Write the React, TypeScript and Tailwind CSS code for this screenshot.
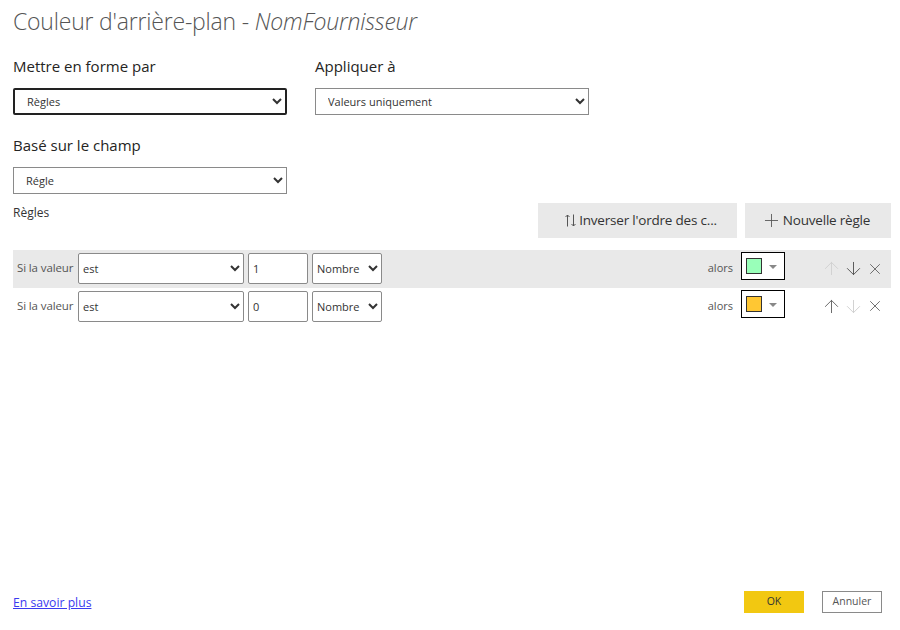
import { ArrowDown, ArrowUp, Plus, X } from "lucide-react";

const font = "font-['Open_Sans','Noto_Sans',sans-serif]";

function SortIcon() {
  return (
    <svg width="11" height="13" viewBox="0 0 11 13" fill="none" stroke="#555" strokeWidth="1">
      <path d="M2.5 12.5V1M.5 3 2.5 1l2 2" />
      <path d="M8.5 .5V12M6.5 10l2 2 2-2" />
    </svg>
  );
}

function RuleRow({
  value,
  color,
  active,
  upOff,
  downOff,
}: {
  value: string;
  color: string;
  active?: boolean;
  upOff?: boolean;
  downOff?: boolean;
}) {
  return (
    <div className={`flex h-[37.5px] items-center pl-[4px] ${active ? "bg-[#e9e9e9]" : "bg-white"}`}>
      <span className="mb-[2px] w-[61px] shrink-0 text-[11.5px] tracking-[-0.12px] text-[#555]">Si la valeur</span>
      <select
        defaultValue="est"
        className="h-[31px] w-[166px] rounded-[2px] border border-[#8a8a8a] bg-white text-[11px] text-[#333]"
      >
        <option>est</option>
      </select>
      <input
        readOnly
        value={value}
        className="ml-[4px] h-[31px] w-[60px] rounded-[2px] border border-[#8a8a8a] bg-white px-[4px] text-[11px] text-[#333]"
      />
      <select
        defaultValue="Nombre"
        className="ml-[4px] h-[31px] w-[70px] rounded-[2px] border border-[#8a8a8a] bg-white text-[11px] text-[#333]"
      >
        <option>Nombre</option>
      </select>
      <span className="mb-[1px] ml-auto text-[11px] text-[#555]">alors</span>
      <button className="mb-[5px] ml-[8px] flex h-[28px] w-[44px] items-center border border-black bg-white pl-[4px]">
        <span className="h-[16px] w-[16px] border border-[#333]" style={{ backgroundColor: color }} />
        <span className="ml-[7px] mt-[2px] h-0 w-0 border-x-[4px] border-t-[4px] border-x-transparent border-t-[#888]" />
      </button>
      <div className="ml-[35px] mr-[5px] flex items-center">
        <span className="flex w-[22px] justify-center">
          <ArrowUp size={21} strokeWidth={1.1} className={upOff ? "text-[#d0d0d0]" : "text-[#666]"} />
        </span>
        <span className="flex w-[22px] justify-center">
          <ArrowDown size={21} strokeWidth={1.1} className={downOff ? "text-[#d0d0d0]" : "text-[#555]"} />
        </span>
        <span className="flex w-[22px] justify-center">
          <X size={18} strokeWidth={1.1} className="text-[#555]" />
        </span>
      </div>
    </div>
  );
}

export default function App() {
  return (
    <div className={`${font} relative flex h-[630px] w-[900px] flex-col overflow-hidden bg-white pl-[13px] pr-[9px]`}>
      <h1 className="mt-[4px] h-[34px] text-[23px] font-light leading-[34px] tracking-[-0.2px] text-[#555]">
        Couleur d'arrière-plan - <i>NomFournisseur</i>
      </h1>

      <div className="mt-[17px] flex gap-[28px]">
        <div className="w-[274px]">
          <label className="block h-[22px] text-[15px] leading-[22px] text-[#252423]">Mettre en forme par</label>
          <select className="mt-[11px] h-[27px] w-full rounded-[2px] border-2 border-[#222] bg-white pl-[8px] text-[11px] text-[#333]">
            <option>Règles</option>
          </select>
        </div>
        <div className="w-[274px]">
          <label className="block h-[22px] text-[15px] leading-[22px] text-[#252423]">Appliquer à</label>
          <select className="mt-[11px] h-[27px] w-full border border-[#8a8a8a] bg-white pl-[8px] text-[11px] text-[#333]">
            <option>Valeurs uniquement</option>
          </select>
        </div>
      </div>

      <label className="mt-[19px] block h-[22px] text-[15px] leading-[22px] text-[#252423]">Basé sur le champ</label>
      <select className="mt-[11px] h-[27px] w-[274px] border border-[#8a8a8a] bg-white pl-[8px] text-[11px] text-[#333]">
        <option>Régle</option>
      </select>

      <div className="mt-[9px] flex h-[35px] items-start justify-between">
        <span className="mt-[2px] text-[12px] leading-[16px] text-[#333]">Règles</span>
        <div className="flex gap-[8px]">
          <button className="flex h-[35px] w-[199px] items-center justify-center gap-[3px] bg-[#e9e9e9] pl-[7px] text-[13.5px] tracking-[-0.2px] text-[#333]">
            <SortIcon />
            Inverser l'ordre des c...
          </button>
          <button className="flex h-[35px] w-[146px] items-center justify-center gap-[1px] bg-[#e9e9e9] pr-[5px] text-[13.5px] tracking-[-0.2px] text-[#333]">
            <Plus size={21} strokeWidth={1} className="text-[#555]" />
            Nouvelle règle
          </button>
        </div>
      </div>

      <div className="mt-[12px] flex flex-col">
        <RuleRow value="1" color="#99ffb9" active upOff />
        <RuleRow value="0" color="#ffc733" downOff />
      </div>

      <div className="mb-[17px] mt-auto flex items-center justify-between">
        <a href="#" className="pt-[3px] text-[12.2px] text-[#3a3af0] underline">
          En savoir plus
        </a>
        <div className="mr-[9px] flex gap-[18px]">
          <button className="h-[22px] w-[60px] bg-[#f2c811] text-[10.5px] text-[#333]">OK</button>
          <button className="h-[22px] w-[60px] border border-[#8a8a8a] bg-white text-[10.5px] text-[#555]">Annuler</button>
        </div>
      </div>
    </div>
  );
}
